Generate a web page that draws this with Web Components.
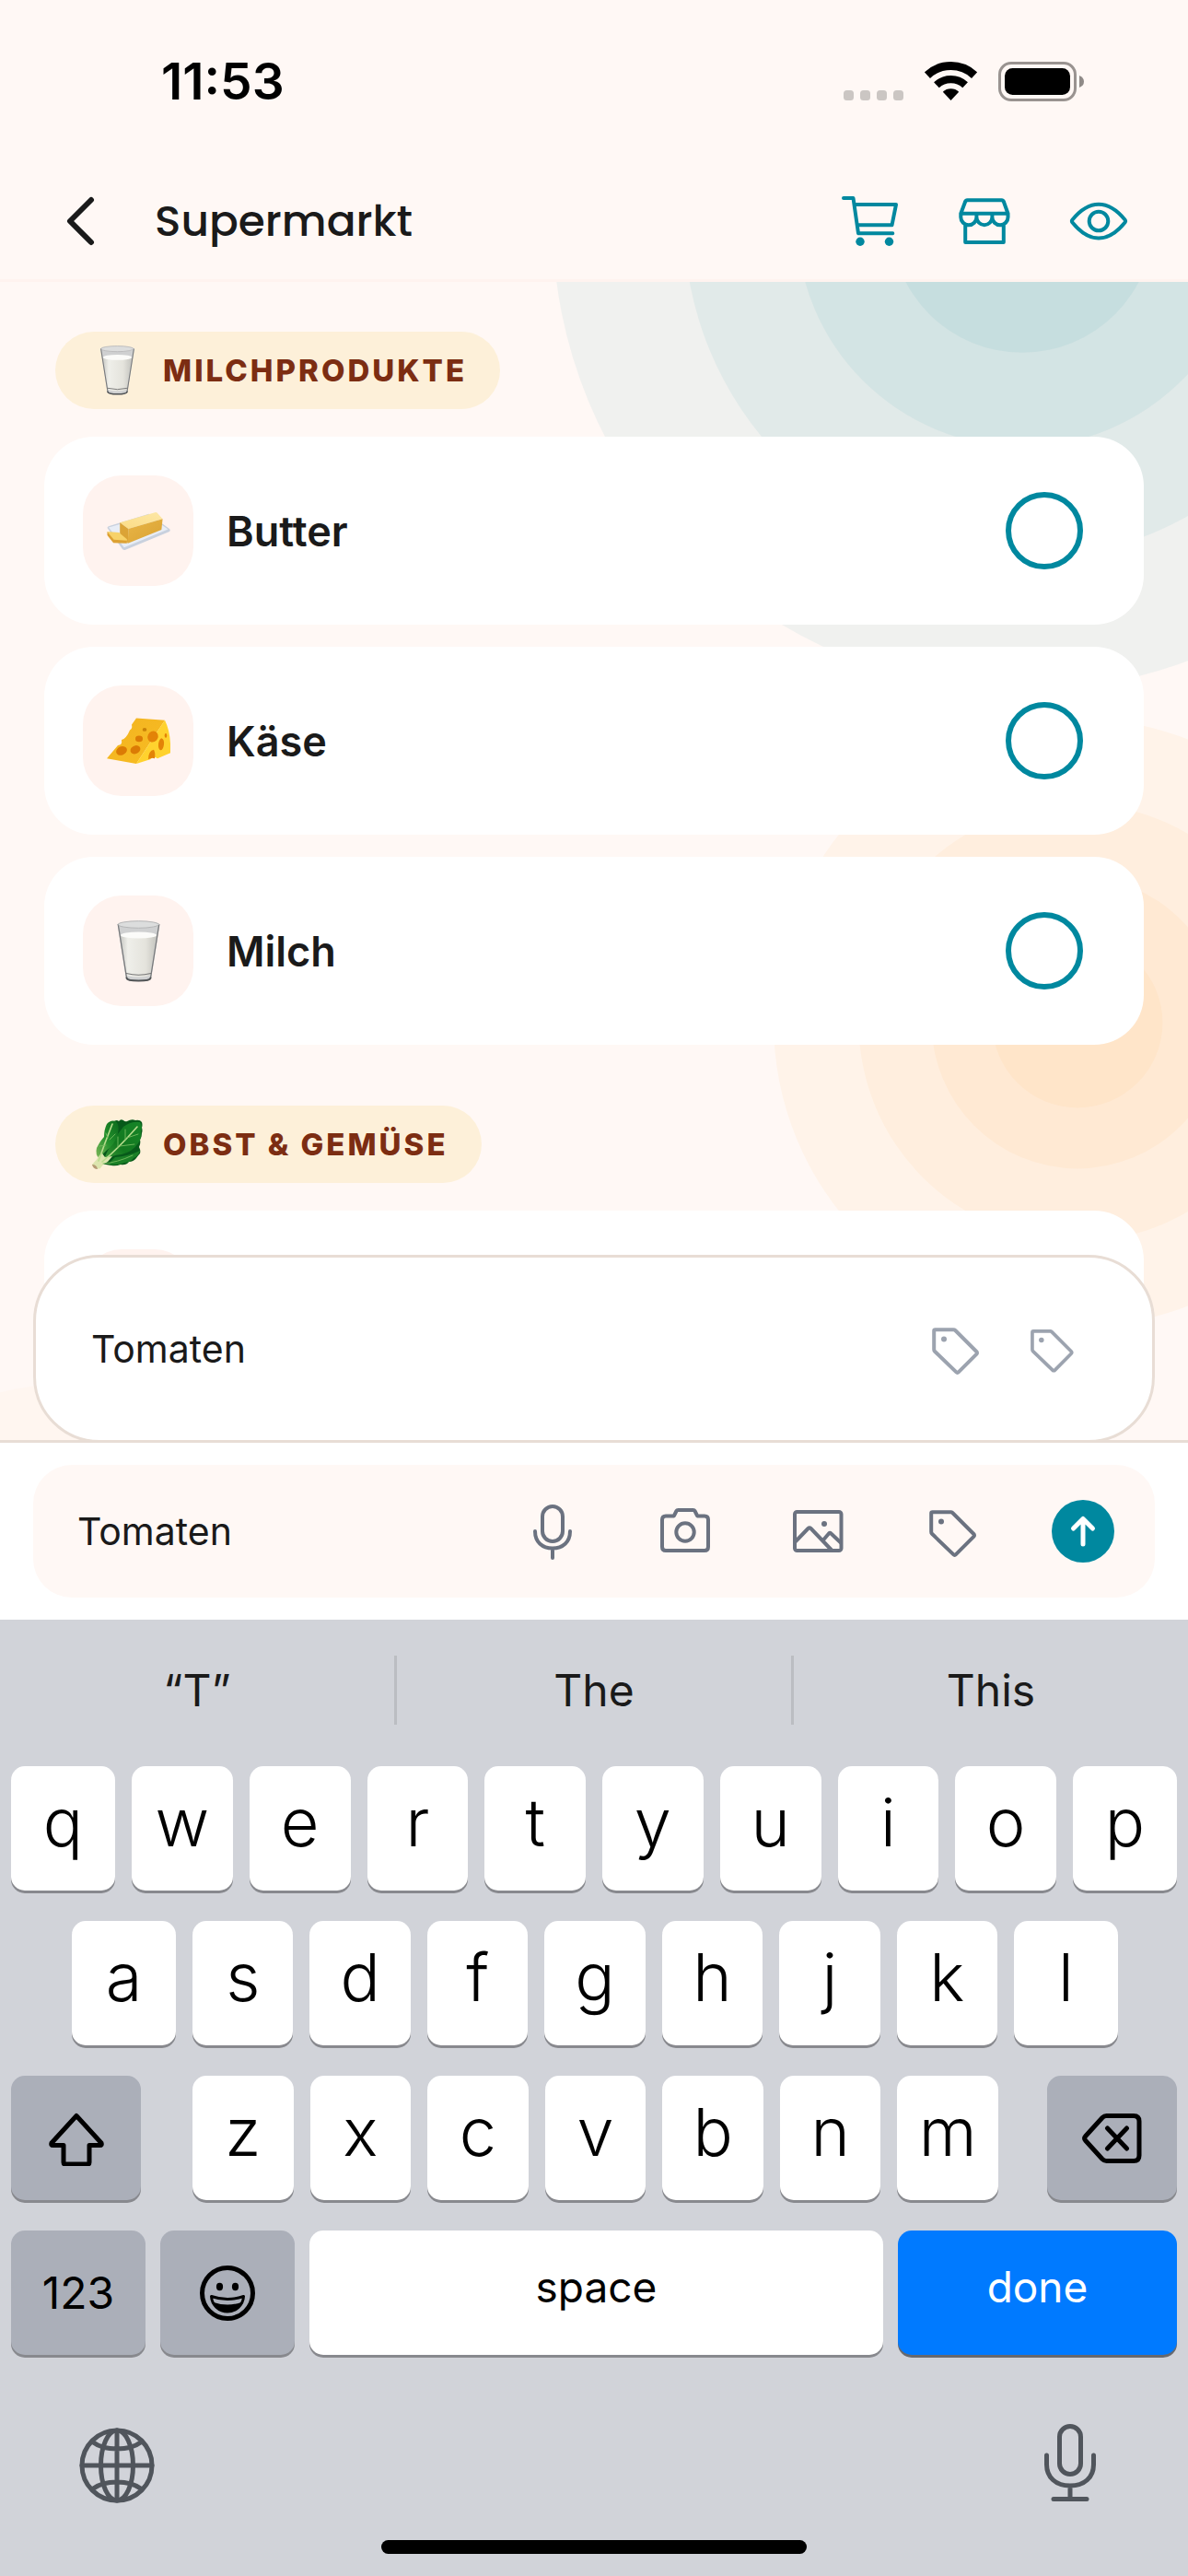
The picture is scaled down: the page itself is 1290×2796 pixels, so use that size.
<!DOCTYPE html>
<html lang="de">
<head>
<meta charset="utf-8">
<meta name="viewport" content="width=device-width, initial-scale=1">
<title>Supermarkt</title>
<style>
  html, body { margin: 0; height: 100%; }
  body {
    --paper: #fff8f5;
    --ink: #1a1a1a;
    --teal: #00889f;
    --blush: #fff3ef;
    --line: #e8ddd5;
    --ui: "Inter", "Liberation Sans", sans-serif;
    background: var(--paper);
    color: var(--ink);
    font-family: var(--ui);
  }
</style>
</head>
<body>
<shopping-app>
  <category-chip icon="milk">Milchprodukte</category-chip>
  <list-item icon="butter">Butter</list-item>
  <list-item icon="cheese">Käse</list-item>
  <list-item icon="milk">Milch</list-item>
  <category-chip icon="lettuce">Obst &amp; Gemüse</category-chip>
  <list-item icon="tomato"></list-item>
</shopping-app>

<script>
const ICONS = {
  back: ['0 0 72 72', '<path d="M48 13 25 36l23 23" stroke-width="6"/>'],
  cart: ['0 0 72 72', '<path d="M7 11h10.500l5.500 38.300h37.300M18.500 18H64l-4.500 22.300H22"/><circle cx="25" cy="58.300" r="4.700" fill="currentColor" stroke="none"/><circle cx="56.500" cy="58.300" r="4.700" fill="currentColor" stroke="none"/>'],
  store: ['0 0 72 72', '<path d="M17.500 13.200h37q2 0 2.500 2l4.500 12.500v4a8.500 8.500 0 0 1-17.100 0 8.500 8.500 0 0 1-17 0 8.500 8.500 0 0 1-17.100 0v-4L15 15.200q.500-2 2.500-2zM10.500 27.700h51M27.400 27.700v4M44.400 27.700v4M15.200 40v19h41.600V40"/>'],
  eye: ['0 0 72 72', '<path d="M7.500 34.500C16 24 25.500 17.700 36 17.700s20 6.300 28.500 16.800q1.200 1.500 0 3C56 48 46.500 54.500 36 54.500S16 48 7.500 37.500q-1.200-1.500 0-3z"/><circle cx="36" cy="36" r="10.300"/>'],
  tag: ['-3 0 72 72', '<path d="M13.500 15.200h19.800q1.200 0 2 .8L58.300 39q1.400 1.400 0 2.800L39 61.200q-1.400 1.400-2.800 0L13 38.800q-.8-.8-.8-2V16.500q0-1.300 1.300-1.300z"/><circle cx="23" cy="25.500" r="3" fill="currentColor" stroke="none"/>'],
  mic: ['0 0 72 72', '<rect x="25" y="9" width="22" height="38" rx="11"/><path d="M17 36c0 12 8 18.500 19 18.500S55 48 55 36M36 54.500V65"/>'],
  camera: ['0 0 72 72', '<path d="M15 19.500h7.500q1.500 0 2-1.500l2-4q.5-1 2-1h16q1.500 0 2 1l2 4q.5 1.500 2 1.500H57q4 0 4 4V53q0 4-4 4H15q-4 0-4-4V23.500q0-4 4-4z"/><circle cx="36" cy="37" r="9.700"/>'],
  picture: ['0 0 72 72', '<rect x="11" y="15" width="50.500" height="42" rx="2.500"/><path d="M12 47 25.500 33q1.500-1.500 3 0L51 56.500M42 45.500l6-7q1.200-1.200 2.400 0L61 48.500"/><circle cx="43" cy="28" r="3" fill="currentColor" stroke="none"/>'],
  send: ['0 0 72 72', '<circle cx="36" cy="36" r="34" fill="currentColor" stroke="none"/><path d="M36 50V23M25.500 33 36 22.500 46.500 33" stroke="#fff" stroke-width="5"/>'],
  shift: ['0 0 66 60', '<path d="M33 5.500 60 35q1 2.500-1.500 2.500H47V56q0 2-2 2H21q-2 0-2-2V37.500H7.500Q5 37.500 6 35z" stroke-width="5"/>'],
  erase: ['0 0 66 60', '<path d="M24.500 5.500H54q6 0 6 6v37q0 6-6 6H24.500q-2.500 0-4.500-2L1.800 32.500q-2.300-2.500 0-5L20 7.500q2-2 4.500-2zM25.500 19l21 22M46.500 19l-21 22" stroke-width="5" transform="translate(2 0)"/>'],
  smile: ['0 0 66 66', '<circle cx="33" cy="33" r="27.500" stroke-width="5"/><ellipse cx="24.500" cy="26" rx="3.600" ry="4.200" fill="currentColor" stroke="none"/><ellipse cx="41.500" cy="26" rx="3.600" ry="4.200" fill="currentColor" stroke="none"/><path d="M15.500 36.500q17.500 6 35 0C50 46 42 53 33 53s-17-7-17.500-16.500z" stroke-width="3"/><path d="M18 43q15 5 30 0-4 9.500-15 9.500T18 43z" fill="currentColor" stroke="none"/>'],
  globe: ['0 0 90 90', '<circle cx="45" cy="45" r="38"/><ellipse cx="45" cy="45" rx="17.500" ry="38"/><path d="M45 7v76M7 45h76M18.500 19.500q10 7.500 26.500 7.500t26.500-7.500M18.500 70.500Q28.500 63 45 63t26.500 7.500"/>'],
  dictate: ['0 0 90 90', '<rect x="33.500" y="2.500" width="23" height="52" rx="11.500"/><path d="M19.500 34v10c0 14 10 23 25.500 23s25.500-9 25.500-23V34M45 67v14.500M27 81.500h36"/>'],

  milk: ['0 0 46 67', `
    <defs><linearGradient id="m" x1="0" x2="1"><stop offset="0" stop-color="#c9c9c4"/><stop offset=".2" stop-color="#efefea"/><stop offset=".7" stop-color="#e4e3dc"/><stop offset="1" stop-color="#c4c4bf"/></linearGradient></defs>
    <g stroke="none"><path d="M0 4 9.500 63q.4 3 13.500 3t13.500-3L46 4z" fill="#cfd0d1"/>
    <path d="M3.500 16 10.500 60q12.500 3 25 0L42.500 16z" fill="url(#m)"/>
    <ellipse cx="23" cy="16" rx="19.500" ry="3.600" fill="#fbfbf9"/>
    <ellipse cx="23" cy="4.500" rx="22.500" ry="4" fill="#dcdddd"/></g>
    <path d="M.8 4.500 10 62.500M45.200 4.500 36 62.500" stroke="#77797b" stroke-width="1.300"/>
    <ellipse cx="23" cy="4.500" rx="22.200" ry="3.800" stroke="#b5b6b7" stroke-width="1"/>
    <path d="M9.700 57.500q13.300 3.500 26.600 0" stroke="#777" stroke-width="1.200"/>
    <path d="M10 62.500q.5 3 13 3t13-3" stroke="#505355" stroke-width="2"/>`],
  butter: ['0 0 68 41', `
    <defs><linearGradient id="bt" x1="0" x2="1" y1="1" y2="0"><stop offset="0" stop-color="#fbdc85"/><stop offset="1" stop-color="#fde7a6"/></linearGradient>
    <linearGradient id="bf" x1="0" x2="1" y1="0" y2="1"><stop offset="0" stop-color="#e9b546"/><stop offset="1" stop-color="#d9a233"/></linearGradient></defs>
    <g stroke="none"><path d="M.5 17q0-1.500 2-2L45 2l22 16q1.500 1.500 0 3L20 40.500q-2 .8-3.500-1z" fill="#c9d1de"/>
    <path d="M2 16.500 45 4l20.500 14.500L18.500 38z" fill="#e8edf6"/>
    <path d="M14 11.500 51.500.5q1.500-.4 2.500.5l5.700 6.500L23 18z" fill="url(#bt)"/>
    <path d="M23 18 59.700 7.500 58.500 19 22.500 33.500z" fill="url(#bf)"/>
    <path d="M14 11.500 23 18l-.5 15.500L14 24z" fill="#dba336"/>
    <path d="M.5 21 13 22l8.500 7v3.500L7.500 31z" fill="#f7d269"/>
    <path d="M.5 21 7.500 29.500l14 1v3L7 33 .5 25z" fill="#dda132"/></g>`],
  cheese: ['0 0 69 50', `
    <defs><linearGradient id="c" x1="0" x2="1" y2="1"><stop offset="0" stop-color="#f2b321"/><stop offset="1" stop-color="#f8bd22"/></linearGradient></defs>
    <g stroke="none"><path d="M0 37 12 25q5 0 4-5 5-1 9-9 3-1 2-5l5-6 31 2-14 18-17 22z" fill="url(#c)"/>
    <path d="M63 2q7 12 6 30l-14 5q-4-3-8 1l-15 4L49 20z" fill="#ffd22e"/>
    <ellipse cx="16" cy="30" rx="6" ry="4" transform="rotate(-15 16 30)" fill="#db7b05"/><ellipse cx="31" cy="29" rx="5.500" ry="3.800" transform="rotate(-15 31 29)" fill="#db7b05"/>
    <ellipse cx="35" cy="19" rx="4" ry="2.800" fill="#db7b05"/><ellipse cx="41" cy="10.500" rx="2.300" ry="1.600" fill="#c98208"/>
    <ellipse cx="50" cy="17" rx="5.800" ry="5" transform="rotate(-20 50 17)" fill="#e38307"/><ellipse cx="59" cy="24" rx="3" ry="5.500" transform="rotate(8 59 24)" fill="#e38307"/>
    <ellipse cx="64" cy="16" rx="1.300" ry="2" fill="#e38307"/><path d="M45 38q0-8 6-9 2 3 1 8-4-1-7 1z" fill="#e38307"/></g>`.replace('<g ', '<g transform="scale(1 1.180)" ')],
  lettuce: ['0 0 55 54', `
    <defs><linearGradient id="l" x1="0" x2="1" y1="1" y2="0"><stop offset="0" stop-color="#3f9a3a"/><stop offset=".4" stop-color="#12781f"/><stop offset="1" stop-color="#178528"/></linearGradient>
    <linearGradient id="k" x1="0" x2="1" y1="1" y2="0"><stop offset="0" stop-color="#7fb85a"/><stop offset=".5" stop-color="#23902c"/><stop offset="1" stop-color="#0b6a1c"/></linearGradient></defs>
    <g stroke="none">
    <path d="M16 6q3-4 8-4 3-2 5 0 2-3 5-1 2 2 4 1 5-3 9-1 5-1 7 2 1 3 0 6 1 3 0 6 0 4-2 7 1 4-1 8 2 4 1 7-2 2-4 5-3 4-8 4-3 4-9 3-5 2-10 1l-12-2z" fill="#07591a"/>
    <path d="M52 34q-2 6-7 8-4 5-10 5-6 3-18 2l8-8q14-1 27-7z" fill="#1b8027"/>
    <path d="M12 45Q20 25 34 8q8-6 18-5 3 4 1 10 1 8-3 13-6 9-18 12-12 1-20 7z" fill="url(#l)"/>
    <path d="M8 43Q3 38 5 31q4-8 8-12 0-8 3-14 4-5 10-3 4 5 2 13-2 9-9 16-7 5-11 12z" fill="url(#k)"/>
    <path d="M0 49q5-5 8-10l3-2 3 4 8-1-5 6q-5 2-8 7-5 2-9-4z" fill="#dce5ae"/>
    <path d="M0 49q5 0 6 5-5 0-6-5z" fill="#b59b74"/></g>
    <path d="M7 45q7-20 15-40M11 46Q28 32 49 8" stroke="#b9dc8e" stroke-width="1.600"/>
    <path d="M12 48q15-1 32-9M17 20l-2-5M15 28l-7 1M19 22l6-6M28 31V19M36 23V11M30 29l16-2M38 20l12-4" stroke="#75bb60" stroke-width=".9"/>`],
  tomato: ['0 0 66 66', '<circle cx="33" cy="36" r="27" fill="#e23b2b" stroke="none"/><path d="M33 14l-9 8M33 14l9 8M33 6v14" stroke="#2f8a32"/>'],
};

const icon = name =>
  `<svg viewBox="${ICONS[name][0]}" fill="none" stroke="currentColor" stroke-width="4" stroke-linecap="round" stroke-linejoin="round" aria-hidden="true">${ICONS[name][1]}</svg>`;

const RESET = `
  *, *::before { box-sizing: border-box; }
  button { margin: 0; padding: 0; border: 0; background: none; color: inherit; font: inherit; display: grid; place-items: center; }
  svg { display: block; }
`;

class Base extends HTMLElement {
  connectedCallback() {
    if (this.shadowRoot) return;
    this.attachShadow({ mode: 'open' }).innerHTML = `<style>${RESET}${this.css()}</style>${this.html()}`;
  }
}

customElements.define('status-bar', class extends Base {
  css() { return `
    :host { display: flex; justify-content: space-between; align-items: center; height: 177px; padding: 0 113px 1px 175px; color: #000; }
    time { font-size: 55px; font-weight: 600; line-height: 60px; }
    .icons { display: flex; align-items: flex-end; gap: 23px; }
  `; }
  html() { return `
    <time>11:53</time>
    <div class="icons">
      <svg width="65" height="43" viewBox="0 0 65 43" fill="#cbc6c3"><rect y="31" width="11" height="11" rx="3.500"/><rect x="18" y="31" width="11" height="11" rx="3.500"/><rect x="36" y="31" width="11" height="11" rx="3.500"/><rect x="54" y="31" width="11" height="11" rx="3.500"/></svg>
      <svg width="57" height="43" viewBox="0 0 57 43" fill="none" stroke="#000"><path d="M2.900 14.600a37.500 37.500 0 0 1 51.200 0" stroke-width="9"/><path d="M12.900 25.300a22.900 22.900 0 0 1 31.200 0" stroke-width="8.300"/><path d="M28.500 42 19.800 32.700a12.700 12.700 0 0 1 17.400 0z" fill="#000" stroke="none"/></svg>
      <svg width="93" height="43" viewBox="0 0 93 43"><rect x="1.500" y="1.500" width="82" height="40" rx="12.500" fill="none" stroke="#999390" stroke-width="3"/><rect x="7" y="7" width="71" height="29" rx="8.500"/><path d="M88 15q5 2 5 6.500T88 28z" fill="#8f8a87"/></svg>
    </div>`; }
});

customElements.define('app-header', class extends Base {
  css() { return `
    :host { display: flex; align-items: center; height: 129px; padding: 0 61px 0 51px; border-bottom: 3px solid var(--blush); }
    svg { width: 72px; height: 72px; }
    h1 { flex: 1; margin: 0 0 0 45px; font: 500 47px/72px "Poppins", var(--ui); }
    nav { display: flex; gap: 52px; color: var(--teal); }
  `; }
  html() { return `
    <button aria-label="Zurück">${icon('back')}</button>
    <h1><slot></slot></h1>
    <nav><button aria-label="Einkaufswagen">${icon('cart')}</button><button aria-label="Markt">${icon('store')}</button><button aria-label="Ansicht">${icon('eye')}</button></nav>`; }
});

customElements.define('category-chip', class extends Base {
  css() { return `
    :host { display: block; padding: 42px 12px 30px; }
    h2 { display: inline-flex; align-items: center; gap: 18px; height: 84px; margin: 0; padding: 0 36px; border-radius: 42px; background: #fdf0d9; color: #7c2d12; font-size: 33px; font-weight: 800; letter-spacing: 3px; text-transform: uppercase; vertical-align: top; }
    svg { width: 63px; height: 54px; }
  `; }
  html() { return `<h2>${icon(this.getAttribute('icon'))}<slot></slot></h2>`; }
});

customElements.define('list-item', class extends Base {
  css() { return `
    :host { display: block; }
    label { display: flex; align-items: center; gap: 36px; height: 204px; padding: 0 66px 0 42px; border-radius: 54px; background: #fff; font-size: 45px; font-weight: 600; }
    .tile { display: grid; place-items: center; width: 120px; height: 120px; border-radius: 42px; background: var(--blush); }
    .tile svg { width: 69px; height: 67px; }
    .name { flex: 1; }
    input { appearance: none; width: 84px; height: 84px; margin: 0; border: 6px solid var(--teal); border-radius: 50%; }
  `; }
  html() { return `<label><span class="tile">${icon(this.getAttribute('icon'))}</span><span class="name"><slot></slot></span><input type="checkbox"></label>`; }
});

customElements.define('ring-backdrop', class extends Base {
  css() { return `
    :host { display: block; overflow: hidden; }
    svg { position: absolute; overflow: visible; width: 1px; height: 1px; }
    .top { top: 0; right: 0; }
    .low { bottom: 0; left: 0; }
  `; }
  html() {
    const rings = (x, y, r, color, alpha) => [1, .72, .48, .28].map(k => `<circle cx="${x}" cy="${y}" r="${r * k}" fill="${color}" fill-opacity="${alpha}"/>`).join('');
    return `
      <svg class="top">${rings(-179, -66, 510, '#00889c', .06)}${rings(-119, 804, 330, '#f79d10', .05)}</svg>
      <svg class="low">${rings(93, 328, 390, '#f59e0b', .02)}</svg>`;
  }
});

customElements.define('draft-bar', class extends Base {
  css() { return `
    :host { display: flex; align-items: center; height: 204px; padding: 0 78px 0 60px; border: 3px solid var(--line); border-radius: 72px; background: #fff; color: #9ca3af; }
    input { flex: 1; min-width: 0; height: 72px; margin: 0; padding: 0; border: 0; background: none; color: var(--ink); font: 400 41px/60px var(--ui); outline: 0; }
    .tags { display: flex; align-items: center; gap: 36px; }
    .tags svg { width: 72px; height: 72px; }
    .tags .small svg { width: 66px; height: 66px; }
  `; }
  html() { return `<input type="text" aria-label="Artikel" value="Tomaten"><div class="tags"><button aria-label="Etikett">${icon('tag')}</button><button class="small" aria-label="Kategorie">${icon('tag')}</button></div>`; }
});

customElements.define('compose-bar', class extends Base {
  css() { return `
    :host { display: block; padding: 24px 36px; border-top: 3px solid var(--line); background: #fff; }
    form { display: flex; align-items: center; gap: 72px; height: 144px; padding: 0 42px 0 48px; border-radius: 42px; background: var(--paper); color: #6b7280; }
    input { flex: 1; min-width: 0; height: 72px; margin: 0; padding: 0; border: 0; background: none; color: var(--ink); font: 400 41px/60px var(--ui); outline: 0; }
    svg { width: 72px; height: 72px; }
    .send { color: var(--teal); }
  `; }
  html() { return `<form>
    <input type="text" aria-label="Neuer Artikel" value="Tomaten">
    <button type="button" aria-label="Sprache">${icon('mic')}</button>
    <button type="button" aria-label="Kamera">${icon('camera')}</button>
    <button type="button" aria-label="Bild">${icon('picture')}</button>
    <button type="button" aria-label="Etikett">${icon('tag')}</button>
    <button type="button" class="send" aria-label="Senden">${icon('send')}</button>
  </form>`; }
});

customElements.define('touch-keyboard', class extends Base {
  css() { return `
    :host { display: block; padding: 39px 0 24px; background: #d1d3d9; color: #000; }
    .suggest { display: flex; margin-bottom: 45px; }
    .suggest button { flex: 1 1 0; height: 75px; font-size: 48px; color: #1a1a1a; }
    .suggest button:not(:last-child) { border-right: 3px solid #bbbdc2; }
    .keys { display: grid; gap: 33px; padding: 0 12px; }
    .row { display: flex; gap: 18px; }
    .row.edge button:first-child, .row.edge button:last-child { flex: 0 0 113px; }
    .row.second { padding: 0 64px 0 66px; }
    .row.last { gap: 16px; }
    .row button { flex: 1; height: 135px; padding-bottom: 14px; border-radius: 15px; background: #fff; box-shadow: 0 3px 0 #88898e; font-size: 72px; font-weight: 300; line-height: 96px; }
    .letters { display: flex; flex: 1; gap: 18px; margin: 0 35px 0 38px; }
    .row .mod { background: #abafb9; padding: 0; }
    .row .side { flex: 0 0 141px; }
    .row .num { flex: 0 0 146px; }
    .row .word { font-size: 46px; font-weight: 400; }
    .row .num.word { padding: 0; font-size: 48px; }
    .row .done { flex: 0 0 303px; background: #007aff; color: #fff; box-shadow: 0 3px 0 #67696e; }
    .side svg { width: 66px; height: 60px; }
    .num svg { width: 66px; height: 66px; }
    .tools { display: flex; justify-content: space-between; padding: 75px 83px 36px 82px; color: #50555c; }
    .tools svg { width: 90px; height: 90px; stroke-width: 5px; }
    .home { width: 462px; height: 15px; margin: 0 auto; border-radius: 8px; background: #000; }
  `; }
  html() {
    const keys = s => [...s].map(c => `<button>${c}</button>`).join('');
    return `
    <div class="suggest"><button>“T”</button><button>The</button><button>This</button></div>
    <div class="keys">
      <div class="row edge">${keys('qwertyuiop')}</div>
      <div class="row edge second">${keys('asdfghjkl')}</div>
      <div class="row"><button class="mod side" aria-label="shift">${icon('shift')}</button><div class="letters">${keys('zxcvbnm')}</div><button class="mod side" aria-label="delete">${icon('erase')}</button></div>
      <div class="row last"><button class="mod num word">123</button><button class="mod num" aria-label="emoji">${icon('smile')}</button><button class="word">space</button><button class="word done">done</button></div>
    </div>
    <div class="tools"><button aria-label="language">${icon('globe')}</button><button aria-label="dictation">${icon('dictate')}</button></div>
    <div class="home"></div>`;
  }
});

customElements.define('shopping-app', class extends Base {
  css() { return `
    :host { display: flex; flex-direction: column; height: 100vh; overflow: hidden; }
    main { position: relative; flex: 1; min-height: 0; overflow: hidden; }
    ring-backdrop { position: absolute; inset: 0; }
    .list { position: relative; display: flex; flex-direction: column; padding: 12px 48px 0; }
    ::slotted(list-item) { margin-bottom: 24px; }
    /* The draft row floats over the end of the list and meets the compose bar's top line. */
    draft-bar { position: absolute; left: 36px; right: 36px; bottom: -3px; }
    compose-bar { position: relative; }
  `; }
  html() { return `
    <status-bar></status-bar>
    <app-header>Supermarkt</app-header>
    <main>
      <ring-backdrop></ring-backdrop>
      <div class="list"><slot></slot></div>
      <draft-bar></draft-bar>
    </main>
    <compose-bar></compose-bar>
    <touch-keyboard></touch-keyboard>`; }
});
</script>
</body>
</html>
